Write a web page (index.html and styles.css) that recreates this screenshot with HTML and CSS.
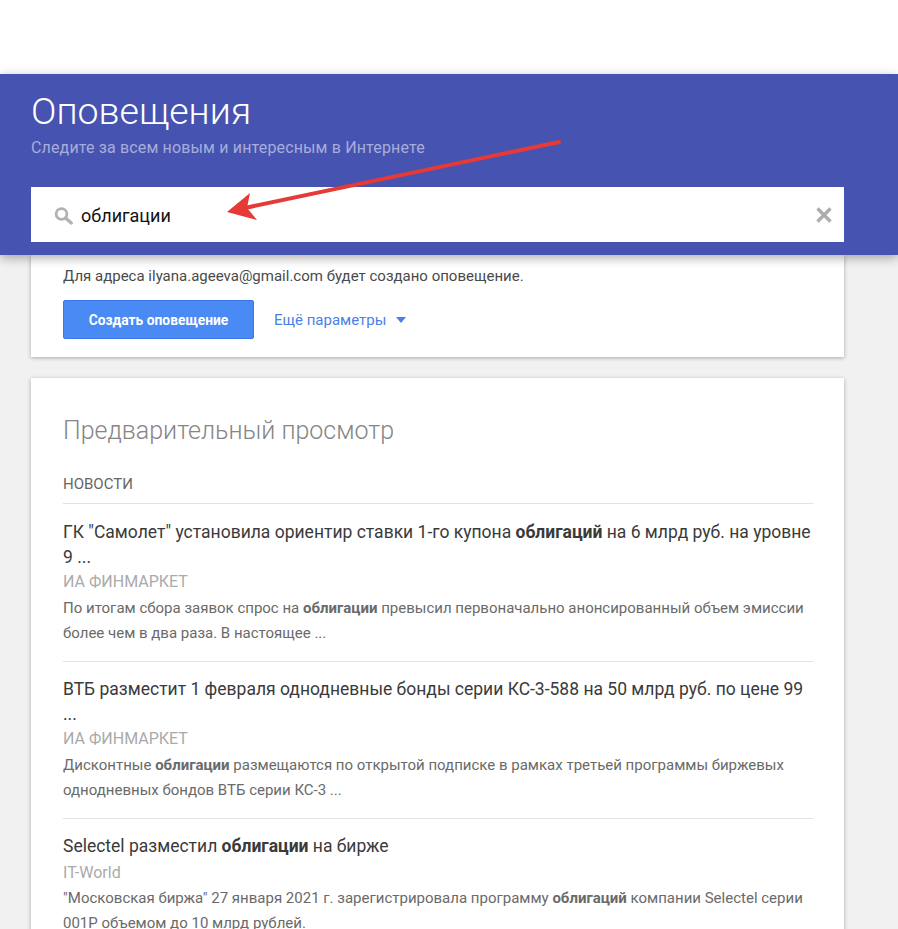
FILE: index.html
```html
<!DOCTYPE html>
<html lang="ru">
<head>
<meta charset="utf-8">
<title>Оповещения</title>
<link rel="stylesheet" href="styles.css">
</head>
<body>
<div class="topbar"></div>
<header class="hero">
  <h1 class="hero-title">Оповещения</h1>
  <p class="hero-sub">Следите за всем новым и интересным в Интернете</p>
  <div class="search">
    <svg class="search-icon" width="20" height="20" viewBox="0 0 20 20"><circle cx="7.500" cy="9" r="5.400" fill="none" stroke="#b2b2b2" stroke-width="2.800"/><path d="M11.500 13 17.300 18" stroke="#b2b2b2" stroke-width="3.200" stroke-linecap="round"/></svg>
    <span class="search-text">облигации</span>
    <svg class="search-clear" width="18" height="18" viewBox="0 0 18 18"><path d="M2.5 2.5 15.500 15.500M15.500 2.500 2.500 15.500" stroke="#adadad" stroke-width="3.400"/></svg>
  </div>
</header>
<svg class="arrow" width="898" height="300" viewBox="0 0 898 300"><path d="M559 142 240 209" stroke="#e53a35" stroke-width="4" stroke-linecap="round" fill="none"/><path d="M227 212 250 193 247 208 257 220Z" fill="#e53a35"/></svg>
<main class="content">
  <section class="card card-create">
    <p class="create-note">Для адреса ilyana.ageeva@gmail.com будет создано оповещение.</p>
    <div class="create-actions">
      <button class="btn-create">Создать оповещение</button>
      <span class="more">Ещё параметры<i class="caret"></i></span>
    </div>
  </section>
  <section class="card card-preview">
    <h2 class="preview-title">Предварительный просмотр</h2>
    <h3 class="section-label">НОВОСТИ</h3>
    <article class="item">
      <div class="item-title">ГК "Самолет" установила ориентир ставки 1-го купона <b>облигаций</b> на 6 млрд руб. на уровне 9 ...</div>
      <div class="item-source">ИА ФИНМАРКЕТ</div>
      <div class="item-text">По итогам сбора заявок спрос на <b>облигации</b> превысил первоначально анонсированный объем эмиссии более чем в два раза. В настоящее ...</div>
    </article>
    <article class="item">
      <div class="item-title">ВТБ разместит 1 февраля однодневные бонды серии КС-3-588 на 50 млрд руб. по цене 99 ...</div>
      <div class="item-source">ИА ФИНМАРКЕТ</div>
      <div class="item-text">Дисконтные <b>облигации</b> размещаются по открытой подписке в рамках третьей программы биржевых однодневных бондов ВТБ серии КС-3 ...</div>
    </article>
    <article class="item">
      <div class="item-title">Selectel разместил <b>облигации</b> на бирже</div>
      <div class="item-source">IT-World</div>
      <div class="item-text">"Московская биржа" 27 января 2021 г. зарегистрировала программу <b>облигаций</b> компании Selectel серии 001P объемом до 10 млрд рублей.</div>
    </article>
  </section>
</main>
</body>
</html>
```
FILE: styles.css
```css
* { box-sizing: border-box; }
html, body { margin: 0; height: 929px; overflow: hidden; }
body { position: relative; background: #f1f1f1; font-family: Roboto, "Liberation Sans", sans-serif; }
.topbar { height: 74px; background: #fff; }
.hero { position: relative; z-index: 2; height: 181px; background: #4753b0; padding: 15px 54px 0 31px; box-shadow: 0 3px 10px rgba(0,0,0,.32); }
.hero-title { margin: 0; font-size: 37.500px; line-height: 44px; font-weight: 300; color: #fff; }
.hero-sub { margin: 5px 0 0; font-size: 16px; line-height: 20px; letter-spacing: .15px; color: #a7adda; }
.search { display: flex; align-items: center; height: 55px; margin-top: 29px; padding: 0 11px 0 24px; background: #fff; }
.search-icon { flex: none; margin-left: -1px; }
.search-text { flex: 1; margin-left: 7px; padding-top: 2px; font-size: 18px; color: #111; }
.search-clear { flex: none; }
.arrow { position: absolute; left: 0; top: 0; z-index: 3; }
.content { padding: 0 54px 0 31px; }
.card { background: #fff; box-shadow: 0 1px 4px rgba(0,0,0,.3); padding: 0 31px 0 32px; }
.card-create { height: 102px; padding-top: 11px; }
.create-note { margin: 0; font-size: 15px; line-height: 20px; color: #4a4a4a; }
.create-actions { display: flex; align-items: center; margin-top: 14px; }
.btn-create { width: 191px; height: 39px; padding: 0; border: 1px solid #3b78e7; border-radius: 2px; background: #4a8af4; color: #fff; font: 700 13.800px Roboto, sans-serif; }
.more { display: flex; align-items: center; margin-left: 20px; font-size: 15px; color: #4a80e8; }
.caret { width: 0; height: 0; margin-left: 10px; border: 5.500px solid transparent; border-top: 6px solid #4a80e8; border-bottom: 0; }
.card-preview { margin-top: 21px; height: 700px; padding-top: 36px; }
.preview-title { margin: 0; font-size: 25px; line-height: 34px; font-weight: 300; color: #858585; }
.section-label { margin: 27px 0 0; padding-bottom: 10px; font-size: 15px; line-height: 18px; font-weight: 400; color: #666; border-bottom: 1px solid #e2e2e2; }
.item { padding: 15px 0 15px; border-bottom: 1px solid #e2e2e2; }
.item:first-of-type { padding-top: 16px; }
.item:last-child { border-bottom: 0; }
.item-title { font-size: 17.500px; line-height: 25px; color: #3a3a3a; }
.item-source { margin-top: 1px; font-size: 16px; line-height: 22px; color: #aaa; }
.item:last-child .item-source { margin-top: 3px; }
.item-text { margin-top: 3px; font-size: 15px; line-height: 25px; color: #6a6a6a; }
.item:last-child .item-text { margin-top: 2px; }
```
